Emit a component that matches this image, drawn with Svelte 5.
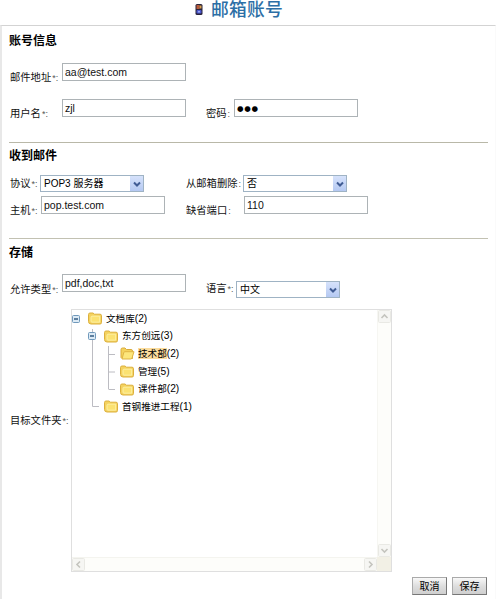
<script>
  const account = { email: 'aa@test.com', user: 'zjl', pass: '●●●' };
  const tree = [
    { label: '文档库', count: 2, level: 0, toggle: true },
    { label: '东方创远', count: 3, level: 1, toggle: true },
    { label: '技术部', count: 2, level: 2, open: true },
    { label: '管理', count: 5, level: 2 },
    { label: '课件部', count: 2, level: 2 },
    { label: '首钢推进工程', count: 1, level: 1 }
  ];
</script>

{#snippet select(value)}
  <div class="select">
    <span>{value}</span>
    <i><svg width="12" height="14" viewBox="0 0 12 14"><path d="M3 5.5 L6 8.5 L9 5.5" fill="none" stroke="#405c94" stroke-width="2" /></svg></i>
  </div>
{/snippet}

{#snippet scroll(d)}
  <svg class="arrow" width="13" height="13" viewBox="0 0 13 13">
    <rect x="0.5" y="0.5" width="12" height="12" rx="1" fill="#f6f6f3" stroke="#e9e9e4" />
    <path {d} fill="none" stroke="#c4c4be" stroke-width="1.6" />
  </svg>
{/snippet}

<div class="page">
  <header>
    <svg width="8" height="11" viewBox="0 0 8 11">
      <rect x="0.5" y="0" width="7" height="11" rx="1.5" fill="#29233c" />
      <rect x="1.5" y="1" width="3" height="4" fill="#b85b3b" />
      <rect x="4.5" y="1.5" width="2" height="3" fill="#d8a04a" />
      <rect x="1.5" y="6" width="5" height="3.5" rx="1" fill="#4c58cf" />
      <rect x="3" y="7" width="2" height="1.5" fill="#9aa5f0" />
    </svg>
    <h1>邮箱账号</h1>
  </header>

  <main>
    <section class="info">
      <h2>账号信息</h2>
      <div class="row r1">
        <label class="wide">邮件地址<b>*:</b></label>
        <div class="input">{account.email}</div>
      </div>
      <div class="row r2">
        <label class="wide">用户名<b>*:</b></label>
        <div class="input">{account.user}</div>
        <label class="pw">密码<b>:</b></label>
        <div class="input dots">{account.pass}</div>
      </div>
    </section>

    <section class="receive">
      <h2>收到邮件</h2>
      <div class="row r3">
        <label class="proto">协议<b>*:</b></label>
        {@render select('POP3 服务器')}
        <label class="del">从邮箱删除<b>:</b></label>
        {@render select('否')}
      </div>
      <div class="row r4">
        <label class="host">主机<b>*:</b></label>
        <div class="input">pop.test.com</div>
        <label class="port">缺省端口<b>:</b></label>
        <div class="input">110</div>
      </div>
    </section>

    <section class="store">
      <h2>存储</h2>
      <div class="row r5">
        <label class="wide types">允许类型<b>*:</b></label>
        <div class="input">pdf,doc,txt</div>
        <label class="lang">语言<b>*:</b></label>
        <div class="langbox">{@render select('中文')}</div>
      </div>
      <div class="row r6">
        <label class="target">目标文件夹<b>*:</b></label>
        <div class="tree">
          <div class="view">
            <svg class="lines" width="60" height="110" viewBox="0 0 60 110">
              <path d="M20.5 19V96.5H27M36.5 36V79M36.5 44.5H43M36.5 62H43M36.5 79.5H43" fill="none" stroke="#bcbcc2" />
            </svg>
            <ul>
              {#each tree as node}
                <li class="l{node.level}">
                  <span class="toggle">
                    {#if node.toggle}
                      <svg width="8" height="8" viewBox="0 0 8 8">
                        <rect x="0.5" y="0.5" width="7" height="7" rx="1" fill="#dceaf5" stroke="#7099bb" />
                        <path d="M2 4H6" stroke="#264f78" stroke-width="1.4" />
                      </svg>
                    {/if}
                  </span>
                  <svg class="folder" width="15" height="13" viewBox="0 0 15 13">
                    {#if node.open}
                      <path d="M1 10.5V2.5Q1 1 2.5 1H5L6.5 2.5H11Q12.5 2.5 12.5 4V11.5H2Z" fill="#f4d25e" stroke="#d9ab3a" />
                      <path d="M2 12L3.8 5.5Q4.1 4.7 4.9 4.7H14L12 11Q11.6 12 10.7 12Z" fill="#fce67c" stroke="#dfb445" />
                    {:else}
                      <path d="M0.5 9.5V2.5Q0.5 1 2 1H5L6.5 2.2H12Q13.5 2.2 13.5 3.7V10.5Q13.5 12 12 12H3Q0.5 12 0.5 9.5Z" fill="#f4d25e" stroke="#dcb03e" />
                      <path d="M3 5.2Q3 4.2 4 4.2H11.7V10.2H4Q3 10.2 3 9.2Z" fill="#fbe272" stroke="#fdf0a4" />
                    {/if}
                  </svg>
                  <span class="name"><span class:hit={node.open}>{node.label}</span><em>({node.count})</em></span>
                </li>
              {/each}
            </ul>
          </div>
          <div class="vbar">
            {@render scroll('M3.5 8 L6.5 5 L9.5 8')}
            {@render scroll('M3.5 5 L6.5 8 L9.5 5')}
          </div>
          <div class="hbar">
            {@render scroll('M8 3.5 L5 6.5 L8 9.5')}
            {@render scroll('M5 3.5 L8 6.5 L5 9.5')}
          </div>
          <div class="corner"></div>
        </div>
      </div>
    </section>

    <footer>
      <button>取消</button>
      <button>保存</button>
    </footer>
  </main>
</div>

<style>
  :global(body) { background: #fff; overflow: hidden; }
  .page {
    width: 496px; height: 599px; box-sizing: border-box; overflow: hidden;
    display: flex; flex-direction: column;
    font-family: "Liberation Sans", "Noto Sans CJK SC", sans-serif;
    font-size: 10.3px; color: #111;
  }
  header { height: 25px; flex: none; display: flex; align-items: flex-start; padding-left: 195px; }
  header svg { margin-top: 4px; flex: none; }
  h1 {
    margin: 1px 0 0 8px; font-size: 17.8px; line-height: 19px; font-weight: 500; letter-spacing: 0.2px;
    color: #2c6fa6; white-space: nowrap;
  }
  main {
    flex: 1; display: flex; flex-direction: column; box-sizing: border-box;
    border-top: 1px solid #d3d3d3; border-left: 2px solid #e8e8e8; border-right: 1px solid #fafafa;
    padding: 0 7px 0 7px;
  }
  section { box-sizing: border-box; flex: none; }
  .info { height: 117px; border-bottom: 1px solid #b9b8a8; padding-top: 7px; }
  .receive { height: 96px; border-bottom: 1px solid #c2c1b2; padding-top: 5px; }
  .store { height: 333px; padding-top: 6px; }
  h2 { margin: 0; font-size: 12px; line-height: 16px; font-weight: 700; color: #000; }
  .row { display: flex; align-items: flex-start; }
  label {
    box-sizing: border-box; flex: none; padding-left: 1px; line-height: 14px; white-space: nowrap;
  }
  label b { font-weight: 400; font-size: 9px; color: #555; margin-left: 1px; }
  .input {
    box-sizing: border-box; flex: none; width: 124px; height: 18px; border: 1px solid #adb3b6;
    padding-left: 2px; font-size: 10.5px; line-height: 17px; white-space: nowrap; background: #fff;
  }
  .dots { font-family: "DejaVu Sans", sans-serif; font-size: 7.5px; letter-spacing: 0.7px; color: #000; line-height: 18px; }
  .r1 { margin-top: 14px; height: 36px; }
  .wide { width: 53px; padding-top: 8px; }
  .types { padding-top: 9px; }
  .pw { width: 28px; margin-left: 20px; padding-left: 0; padding-top: 8px; }
  .r3 { margin-top: 11px; height: 21px; }
  .proto { width: 31px; padding-top: 2px; }
  .del { width: 57px; margin-left: 42px; padding-left: 0; padding-top: 2px; }
  .host { width: 32px; padding-top: 8px; }
  .port { width: 58px; margin-left: 21px; padding-left: 0; padding-top: 8px; }
  .r5 { margin-top: 13px; height: 35px; }
  .lang { width: 30px; margin-left: 20px; padding-left: 0; padding-top: 8px; }
  .langbox { padding-top: 7px; }
  .target { width: 62px; padding-top: 105px; }
  .select {
    box-sizing: border-box; width: 104px; height: 17px; border: 1px solid #9fb3c4; flex: none;
    display: flex; justify-content: space-between; padding-left: 3px; line-height: 15px; color: #000;
    font-size: 10px;
  }
  .select i {
    width: 13px; height: 15px; display: flex; align-items: center; justify-content: center;
    background: linear-gradient(#d6e2fb, #b5c9f2);
  }
  .tree {
    box-sizing: border-box; width: 321px; height: 263px; border: 1px solid #dfdfdf;
    display: grid; grid-template-columns: 1fr 14px; grid-template-rows: 1fr 14px;
  }
  .view { position: relative; }
  .lines { position: absolute; left: 0; top: 0; }
  ul { position: relative; list-style: none; margin: 0; padding: 0; }
  li { display: flex; align-items: center; height: 17.6px; }
  .l1 { padding-left: 16px; }
  .l2 { padding-left: 32px; }
  .toggle { width: 16px; height: 8px; display: flex; }
  .name { margin-left: 3px; line-height: 14px; white-space: nowrap; font-size: 9.6px; color: #000; }
  em { font-style: normal; font-size: 10.2px; }
  .hit { background: #fbdc9c; }
  .vbar, .hbar { display: flex; justify-content: space-between; background: #fdfdfa; }
  .vbar { flex-direction: column; border-left: 1px solid #f6f6f2; }
  .hbar { border-top: 1px solid #f4f4ef; }
  .corner { background: #f2f0e5; }
  .arrow { display: block; flex: none; }
  footer { display: flex; gap: 5px; padding: 5px 0 0 403px; }
  button {
    width: 35px; height: 18px; padding: 0; border: 1px solid #999; border-color: #aaa #777 #777 #aaa;
    background: linear-gradient(#f8f8f8, #dedede 50%, #cfcfcf);
    font: 10px/15px "Liberation Sans", "Noto Sans CJK SC", sans-serif; color: #000; flex: none;
  }
</style>
